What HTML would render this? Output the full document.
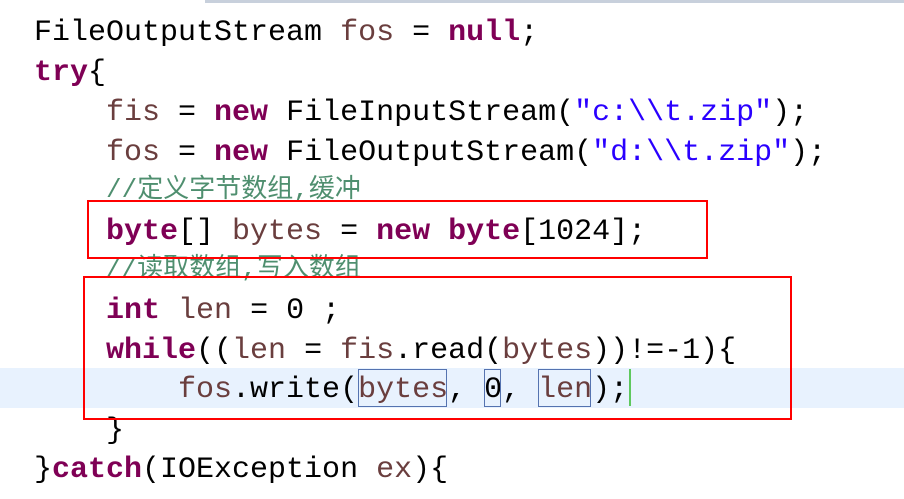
<!DOCTYPE html>
<html><head><meta charset="utf-8"><style>
body{margin:0;width:904px;height:499px;background:#fff;position:relative;overflow:hidden}
.l{position:absolute;left:34px;height:40px;line-height:40px;font-family:"Liberation Mono","Noto Sans CJK SC",monospace;font-size:30px;color:#000;white-space:pre}
.k{color:#7f0055;font-weight:bold}
.v{color:#6a3e3e}
.s{color:#2a00ff}
.c{color:#4f8f6f;font-size:26px}
.box{position:absolute;border:2px solid #f00}
.hb{position:absolute;border:1.5px solid #5573b0}
</style></head><body>
<div style="position:absolute;left:205px;top:0;width:699px;height:3px;background:#c8d0dc"></div>
<div style="position:absolute;left:0;top:368px;width:904px;height:40px;background:#e8f2fe"></div>
<div class="l" style="top:13px">FileOutputStream <span class="v">fos</span> = <span class="k">null</span>;</div>
<div class="l" style="top:53px"><span class="k">try</span>{</div>
<div class="l" style="top:93px">    <span class="v">fis</span> = <span class="k">new</span> FileInputStream(<span class="s">"c:\\t.zip"</span>);</div>
<div class="l" style="top:133px">    <span class="v">fos</span> = <span class="k">new</span> FileOutputStream(<span class="s">"d:\\t.zip"</span>);</div>
<div class="l" style="top:170px">    <span class="c">//定义字节数组,缓冲</span></div>
<div class="l" style="top:212px">    <span class="k">byte</span>[] <span class="v">bytes</span> = <span class="k">new</span> <span class="k">byte</span>[1024];</div>
<div class="l" style="top:249px">    <span class="c">//读取数组,写入数组</span></div>
<div class="l" style="top:291px">    <span class="k">int</span> <span class="v">len</span> = 0 ;</div>
<div class="l" style="top:331px">    <span class="k">while</span>((<span class="v">len</span> = <span class="v">fis</span>.read(<span class="v">bytes</span>))!=-1){</div>
<div class="l" style="top:370px">        <span class="v">fos</span>.write(<span class="v">bytes</span>, 0, <span class="v">len</span>);</div>
<div class="l" style="top:411px">    }</div>
<div class="l" style="top:450px">}<span class="k">catch</span>(IOException <span class="v">ex</span>){</div>
<div class="hb" style="left:358px;top:369px;width:87px;height:36px"></div>
<div class="hb" style="left:484px;top:369px;width:15px;height:36px"></div>
<div class="hb" style="left:538px;top:369px;width:51px;height:36px"></div>
<div style="position:absolute;left:629px;top:369px;width:2px;height:37px;background:#5ec85e"></div>
<div class="box" style="left:87px;top:200px;width:617px;height:55px"></div>
<div class="box" style="left:83px;top:276px;width:705px;height:140px"></div>
</body></html>
